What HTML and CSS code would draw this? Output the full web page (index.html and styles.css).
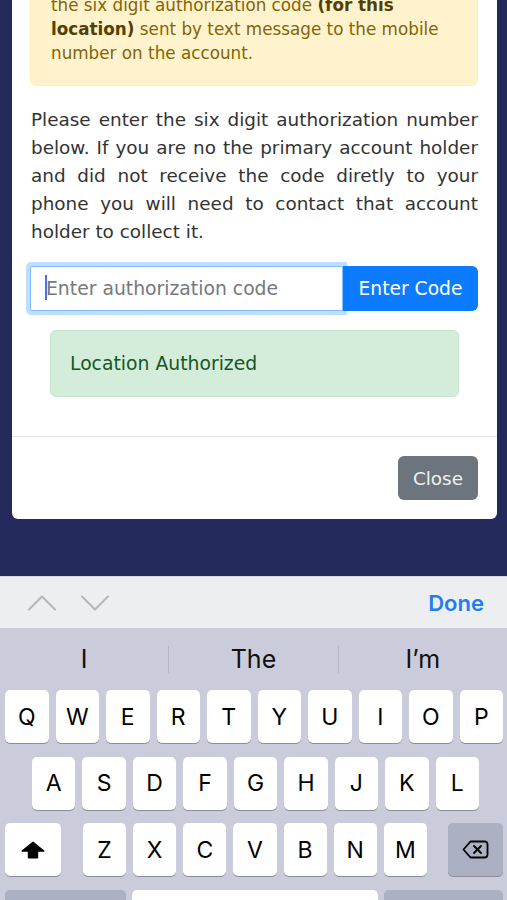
FILE: index.html
```html
<!DOCTYPE html>
<html lang="en">
<head>
<meta charset="utf-8">
<meta name="viewport" content="width=device-width, initial-scale=1">
<title>Authorize Location</title>
<link rel="stylesheet" href="styles.css">
</head>
<body>
<div class="backdrop">
  <div class="modal">
    <div class="modal-body">
      <div class="alert-warning">the six digit authorization code <strong>(for this</strong> <strong>location)</strong> sent by text message to the mobile number on the account.</div>
      <p class="intro">Please enter the six digit authorization number below. If you are no the primary account holder and did not receive the code diretly to your phone you will need to contact that account holder to collect it.</p>
      <div class="input-group">
        <div class="field">
          <input class="code-input" type="text" placeholder="Enter authorization code">
          <span class="caret"></span>
        </div>
        <button class="btn-enter" type="button">Enter Code</button>
      </div>
      <div class="status">
        <div class="alert-success">Location Authorized</div>
      </div>
    </div>
    <div class="modal-footer">
      <button class="btn-close" type="button">Close</button>
    </div>
  </div>
</div>
<div class="keyboard">
  <div class="kb-toolbar">
    <svg class="kb-arrows" width="82" height="16" viewBox="0 0 82 16" aria-hidden="true">
      <polyline points="1,14.5 14,1.5 27,14.5" />
      <polyline points="54,1.5 67,14.5 80,1.5" />
    </svg>
    <span class="kb-done">Done</span>
  </div>
  <div class="kb-suggest">
    <span>I</span><i class="sep"></i><span>The</span><i class="sep"></i><span>I’m</span>
  </div>
  <div class="kb-rows">
    <div class="row row1">
      <span class="key">Q</span><span class="key">W</span><span class="key">E</span><span class="key">R</span><span class="key">T</span><span class="key">Y</span><span class="key">U</span><span class="key">I</span><span class="key">O</span><span class="key">P</span>
    </div>
    <div class="row row2">
      <span class="key">A</span><span class="key">S</span><span class="key">D</span><span class="key">F</span><span class="key">G</span><span class="key">H</span><span class="key">J</span><span class="key">K</span><span class="key">L</span>
    </div>
    <div class="row row3">
      <span class="key key-shift">
        <svg width="24" height="18" viewBox="0 0 24 18" aria-hidden="true"><path d="M12 1.2 L22.8 10 H16.5 V16.8 H7.5 V10 H1.2 Z" /></svg>
      </span>
      <div class="letters">
        <span class="key">Z</span><span class="key">X</span><span class="key">C</span><span class="key">V</span><span class="key">B</span><span class="key">N</span><span class="key">M</span>
      </div>
      <span class="key key-delete">
        <svg width="27" height="19" viewBox="0 0 27 19" aria-hidden="true">
          <path class="outline" d="M8.5 1.5 H22.5 A3 3 0 0 1 25.5 4.5 V14.5 A3 3 0 0 1 22.5 17.5 H8.5 L1.5 9.5 Z" />
          <path class="x" d="M12 6 L19 13 M19 6 L12 13" />
        </svg>
      </span>
    </div>
    <div class="row row4">
      <span class="key key-special key-left"></span>
      <span class="key key-space"></span>
      <span class="key key-special key-right"></span>
    </div>
  </div>
</div>
</body>
</html>
```

FILE: styles.css
```css
* {
  box-sizing: border-box;
}

html, body {
  margin: 0;
  padding: 0;
}

body {
  width: 507px;
  height: 900px;
  overflow: hidden;
  background: #caccdb;
  font-family: "DejaVu Sans", "Noto Sans", sans-serif;
}

/* ---------- page behind the keyboard ---------- */
.backdrop {
  height: 576px;
  background: #23295a;
  overflow: hidden;
}

.modal {
  margin: -47px 10px 0 12px;
  background: #ffffff;
  border-radius: 6px;
}

.modal-body {
  padding: 19px 19px 19px 18px;
}

.alert-warning {
  margin-bottom: 20px;
  padding: 20px;
  background: #fff3cd;
  border: 1px solid #ffeeba;
  border-radius: 6px;
  color: #856404;
  font-size: 16.8px;
  line-height: 24px;
}

.alert-warning strong {
  color: #533f03;
  font-weight: bold;
}

.intro {
  margin: 0 0 20px;
  padding-left: 1px;
  color: #333333;
  font-size: 18.4px;
  line-height: 28px;
  text-align: justify;
}

.input-group {
  display: flex;
  height: 45px;
}

.field {
  position: relative;
  flex: 1;
}

.code-input {
  width: 100%;
  height: 100%;
  margin: 0;
  padding: 0 15px;
  border: 1px solid #80bdff;
  border-radius: 2px 0 0 2px;
  box-shadow: 0 0 0 4px rgba(0, 123, 255, 0.25);
  outline: none;
  background: #ffffff;
  color: #495057;
  font-family: "DejaVu Sans", sans-serif;
  font-size: 18.8px;
}

.code-input::placeholder {
  color: #74797e;
  opacity: 1;
}

.caret {
  position: absolute;
  left: 15px;
  top: 9px;
  width: 2px;
  height: 25px;
  background: #4f70de;
}

.btn-enter {
  width: 135px;
  margin: 0;
  padding: 0;
  border: none;
  border-radius: 0 6px 6px 0;
  background: #0d7bff;
  color: #ffffff;
  font-family: "DejaVu Sans", sans-serif;
  font-size: 18.7px;
}

.status {
  margin: 19px 0 20px;
  padding: 0 19px 0 20px;
}

.alert-success {
  padding: 18.5px 19px;
  background: #d4edda;
  border: 1px solid #c3e6cb;
  border-radius: 6px;
  color: #155724;
  font-size: 18.8px;
  line-height: 28px;
}

.modal-footer {
  display: flex;
  justify-content: flex-end;
  padding: 19px;
  border-top: 1px solid #e6e8ea;
}

.btn-close {
  height: 44px;
  margin: 0;
  padding: 0 15px;
  border: none;
  border-radius: 6px;
  background: #6c757d;
  color: #eef0f1;
  font-family: "DejaVu Sans", sans-serif;
  font-size: 18.4px;
}

/* ---------- keyboard ---------- */
.keyboard {
  height: 324px;
  background: #caccdb;
  font-family: Inter, "Liberation Sans", sans-serif;
  color: #000000;
}

.kb-toolbar {
  display: flex;
  align-items: center;
  justify-content: space-between;
  height: 52px;
  padding: 0 23px 0 28px;
  background: #eceef1;
  border-top: 1px solid #d3d5da;
}

.kb-arrows polyline {
  fill: none;
  stroke: #b3b6bb;
  stroke-width: 2;
  stroke-linecap: round;
  stroke-linejoin: round;
}

.kb-done {
  color: #1e7ef0;
  font-size: 22px;
  font-weight: 600;
}

.kb-suggest {
  display: grid;
  grid-template-columns: 1fr 1px 1fr 1px 1fr;
  align-items: center;
  height: 62px;
  color: #111111;
  font-size: 25px;
  text-align: center;
}

.sep {
  height: 27px;
  background: #b2b5c4;
}

.kb-rows {
  display: flex;
  flex-direction: column;
  gap: 13.5px;
}

.row {
  height: 53px;
}

.row1 {
  display: grid;
  grid-template-columns: repeat(10, 1fr);
  gap: 7px;
  padding: 0 4px 0 5px;
}

.row2 {
  display: grid;
  grid-template-columns: repeat(9, 1fr);
  gap: 7px;
  padding: 0 28px 0 32px;
}

.row3 {
  display: flex;
  padding: 0 4px 0 5px;
}

.letters {
  flex: 1;
  display: grid;
  grid-template-columns: repeat(7, 1fr);
  gap: 7px;
  margin: 0 21px 0 22px;
}

.row4 {
  display: flex;
  gap: 6px;
  padding: 0 4px 0 5px;
}

.key {
  display: flex;
  align-items: center;
  justify-content: center;
  height: 53px;
  background: #ffffff;
  border-radius: 5px;
  box-shadow: 0 1px 0 #8b8d98;
  font-size: 23px;
  font-weight: 400;
}

.key-shift {
  width: 56px;
}

.key-shift svg path {
  fill: #000000;
  stroke: #000000;
  stroke-width: 1.4;
  stroke-linejoin: round;
}

.key-delete {
  width: 55px;
  background: #abb0c3;
}

.key-delete .outline {
  fill: none;
  stroke: #000000;
  stroke-width: 1.8;
  stroke-linejoin: round;
}

.key-delete .x {
  fill: none;
  stroke: #000000;
  stroke-width: 1.8;
  stroke-linecap: round;
}

.key-special {
  background: #abb0c3;
}

.key-left {
  width: 121px;
}

.key-space {
  flex: 1;
}

.key-right {
  width: 119px;
}
```
